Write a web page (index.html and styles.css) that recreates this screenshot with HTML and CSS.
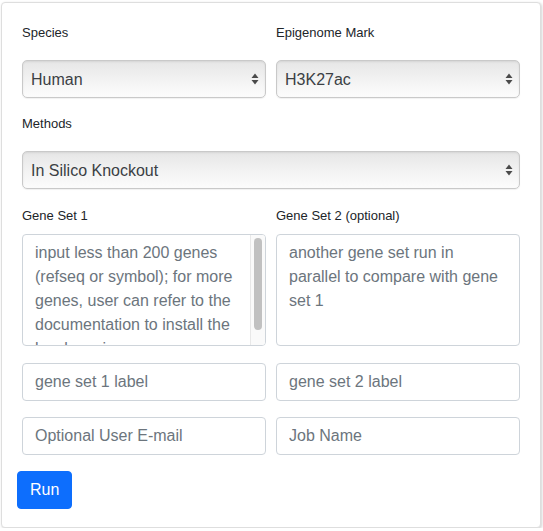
FILE: index.html
```html
<!DOCTYPE html>
<html>
<head>
<meta charset="utf-8">
<link rel="stylesheet" href="styles.css">
</head>
<body>
<div class="card">
  <div class="row">
    <div class="group">
      <label class="lbl">Species</label>
      <div class="sel-wrap">
        <select class="sel"><option>Human</option><option>Mouse</option></select>
        <svg class="arrows" width="8" height="12" viewBox="0 0 8 12"><path d="M4 0.5 L7.5 5 L0.5 5 Z M4 11.5 L7.5 7 L0.5 7 Z" fill="#4a4a4a"/></svg>
      </div>
    </div>
    <div class="group">
      <label class="lbl">Epigenome Mark</label>
      <div class="sel-wrap">
        <select class="sel"><option>H3K27ac</option></select>
        <svg class="arrows" width="8" height="12" viewBox="0 0 8 12"><path d="M4 0.5 L7.5 5 L0.5 5 Z M4 11.5 L7.5 7 L0.5 7 Z" fill="#4a4a4a"/></svg>
      </div>
    </div>
  </div>
  <div class="group methods">
    <label class="lbl">Methods</label>
    <div class="sel-wrap">
      <select class="sel"><option>In Silico Knockout</option></select>
      <svg class="arrows" width="8" height="12" viewBox="0 0 8 12"><path d="M4 0.5 L7.5 5 L0.5 5 Z M4 11.5 L7.5 7 L0.5 7 Z" fill="#4a4a4a"/></svg>
    </div>
  </div>
  <div class="row">
    <div class="group tall">
      <label class="lbl">Gene Set 1</label>
      <div class="ta-wrap">
        <textarea class="ta scroll">input less than 200 genes (refseq or symbol); for more genes, user can refer to the documentation to install the local version</textarea>
        <div class="sb"><div class="sb-thumb"></div></div>
      </div>
    </div>
    <div class="group tall">
      <label class="lbl">Gene Set 2 (optional)</label>
      <textarea class="ta">another gene set run in parallel to compare with gene set 1</textarea>
    </div>
  </div>
  <div class="row">
    <div class="group"><input class="inp" type="text" placeholder="gene set 1 label"></div>
    <div class="group"><input class="inp" type="text" placeholder="gene set 2 label"></div>
  </div>
  <div class="row">
    <div class="group"><input class="inp" type="text" placeholder="Optional User E-mail"></div>
    <div class="group"><input class="inp" type="text" placeholder="Job Name"></div>
  </div>
  <button class="btn">Run</button>
</div>
</body>
</html>
```
FILE: styles.css
```css
* { box-sizing: border-box; }
html, body { margin: 0; padding: 0; background: #fff; }
body {
  font-family: "Liberation Sans", Arial, sans-serif;
  color: #212529;
}
.card {
  margin: 2px 0 0 1px;
  width: 540px;
  height: 526px;
  border: 1px solid #dedede;
  border-radius: 4px;
  box-shadow: 1px 1px 3px rgba(0,0,0,0.18);
  padding: 20px 20px 18px 20px;
  background: #fff;
}
.row {
  display: grid;
  grid-template-columns: 244px 244px;
  column-gap: 10px;
}
.group { margin-bottom: 16px; }
.group.methods { margin-bottom: 17px; }
.group.tall { margin-bottom: 17px; }
.lbl {
  display: block;
  font-size: 13px;
  line-height: 20px;
  margin-bottom: 8px;
}
.sel-wrap {
  position: relative;
  padding-top: 9px;
}
.sel {
  -webkit-appearance: none;
  appearance: none;
  display: block;
  width: 100%;
  height: 38px;
  margin: 0;
  padding: 0 24px 0 8px;
  font-family: inherit;
  font-size: 16px;
  color: #3b3f44;
  border: 1px solid #c9c9c9;
  border-radius: 5px;
  background: linear-gradient(#e6e6e6, #f3f3f3 55%, #fcfcfc);
  box-shadow: inset 0 1px 2px rgba(0,0,0,0.08), 0 1px 1px rgba(0,0,0,0.06);
  outline: none;
}
.arrows {
  position: absolute;
  right: 7px;
  top: 22px;
  pointer-events: none;
}
.ta-wrap { position: relative; }
.ta {
  display: block;
  width: 100%;
  height: 112px;
  margin: 0;
  padding: 6px 12px;
  font-family: inherit;
  font-size: 16px;
  line-height: 24px;
  color: #6c757d;
  border: 1px solid #ced4da;
  border-radius: 4px;
  resize: none;
  outline: none;
  overflow: hidden;
}
.ta.scroll { padding-right: 15px; }
.sb {
  position: absolute;
  top: 1px;
  right: 1px;
  bottom: 1px;
  width: 15px;
  background: #fafafa;
  border-left: 1px solid #e8e8e8;
  border-radius: 0 3px 3px 0;
  padding: 3px 3px 0 3px;
}
.sb-thumb {
  width: 8px;
  height: 92px;
  background: #c1c1c1;
  border-radius: 4px;
}
.inp {
  display: block;
  width: 100%;
  height: 38px;
  margin: 0;
  padding: 6px 12px;
  font-family: inherit;
  font-size: 16px;
  line-height: 24px;
  color: #495057;
  border: 1px solid #ced4da;
  border-radius: 4px;
  outline: none;
}
.inp::placeholder { color: #6c757d; opacity: 1; }
.btn {
  display: block;
  margin: 0 0 0 -5px;
  height: 38px;
  padding: 6px 12px;
  font-family: inherit;
  font-size: 16px;
  line-height: 24px;
  color: #fff;
  background: #0d6efd;
  border: 1px solid #0d6efd;
  border-radius: 4px;
}
```
